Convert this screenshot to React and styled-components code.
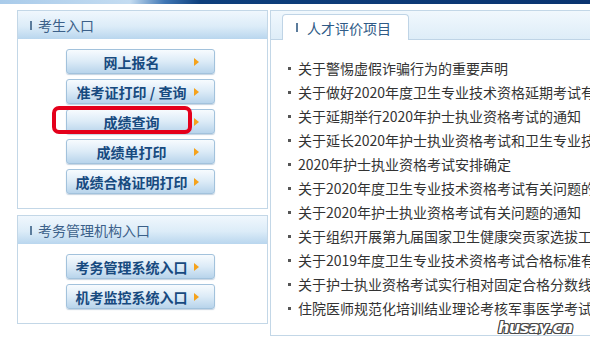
import React from "react";
import styled, { createGlobalStyle } from "styled-components";

const GlobalStyle = createGlobalStyle`
  html, body {
    margin: 0;
    padding: 0;
    background: #fff;
    overflow: hidden;
  }
  body {
    font-family: "Noto Sans CJK SC", "Noto Sans", sans-serif;
  }
`;

const examineeLinks = [
  "网上报名",
  "准考证打印 / 查询",
  "成绩查询",
  "成绩单打印",
  "成绩合格证明打印",
];

const agencyLinks = ["考务管理系统入口", "机考监控系统入口"];

// only the part that fits the panel is shown in the page
const news = [
  "关于警惕虚假诈骗行为的重要声明",
  "关于做好2020年度卫生专业技术资格延期考试有",
  "关于延期举行2020年护士执业资格考试的通知",
  "关于延长2020年护士执业资格考试和卫生专业技",
  "2020年护士执业资格考试安排确定",
  "关于2020年度卫生专业技术资格考试有关问题的",
  "关于2020年护士执业资格考试有关问题的通知",
  "关于组织开展第九届国家卫生健康突贡家选拔工",
  "关于2019年度卫生专业技术资格考试合格标准有",
  "关于护士执业资格考试实行相对固定合格分数线",
  "住院医师规范化培训结业理论考核军事医学考试",
];

export default function App() {
  return (
    <Page>
      <GlobalStyle />
      <TopBar />
      <Main>
        <LeftColumn>
          <Panel>
            <PanelHeader>
              <Marker />
              考生入口
            </PanelHeader>
            <ButtonList>
              {examineeLinks.map((label) => (
                <EntryButton key={label}>
                  <ButtonText>{label}</ButtonText>
                  <Arrow />
                  {label === "成绩查询" && <Highlight />}
                </EntryButton>
              ))}
            </ButtonList>
          </Panel>
          <Panel>
            <PanelHeader>
              <Marker />
              考务管理机构入口
            </PanelHeader>
            <ButtonList>
              {agencyLinks.map((label) => (
                <EntryButton key={label}>
                  <ButtonText>{label}</ButtonText>
                  <Arrow />
                </EntryButton>
              ))}
            </ButtonList>
          </Panel>
        </LeftColumn>
        <NewsPanel>
          <TabBar>
            <Tab>
              <Marker />
              人才评价项目
            </Tab>
          </TabBar>
          <NewsList>
            {news.map((item) => (
              <NewsItem key={item}>{item}</NewsItem>
            ))}
          </NewsList>
          <Watermark>husay.cn</Watermark>
        </NewsPanel>
      </Main>
    </Page>
  );
}

const Page = styled.div`
  width: 590px;
  height: 340px;
  overflow: hidden;
`;

const TopBar = styled.div`
  height: 4px;
  background: linear-gradient(
    90deg,
    #a9cbea 0,
    #c4dcf1 130px,
    #3f76b4 165px,
    #0e3f7c 200px,
    #0a3470 100%
  );
`;

const Main = styled.div`
  display: flex;
  gap: 2px;
  padding: 6px 0 0 17px;
`;

const LeftColumn = styled.div`
  display: flex;
  flex-direction: column;
  gap: 6px;
  width: 251px;
  flex: none;
`;

const Panel = styled.div`
  border: 1px solid #c3d7e7;
  background: #fff;
`;

const PanelHeader = styled.div`
  display: flex;
  align-items: center;
  height: 28px;
  padding-left: 12px;
  gap: 6px;
  font-size: 14px;
  color: #3b6089;
  background: linear-gradient(180deg, #f0f7fd 0%, #dcecf8 55%, #b9d6ee 100%);
`;

const Marker = styled.span`
  display: inline-block;
  width: 2px;
  height: 9px;
  background: #5b7c9c;
`;

const ButtonList = styled.div`
  display: flex;
  flex-direction: column;
  align-items: center;
  gap: 5px;
  padding: 10px 4px 14px 0;
`;

const EntryButton = styled.div`
  position: relative;
  display: flex;
  align-items: center;
  box-sizing: border-box;
  width: 149px;
  height: 25px;
  border: 1px solid #a2c2dc;
  border-radius: 3px;
  background: linear-gradient(180deg, #f7fbfe 0%, #dcebf7 50%, #b8d4eb 100%);
  box-shadow: 0 1px 1px rgba(90, 130, 170, 0.35);
`;

const ButtonText = styled.span`
  flex: 1;
  text-align: center;
  padding-left: 4px;
  font-size: 14px;
  font-weight: bold;
  color: #174a7f;
  white-space: nowrap;
`;

const Arrow = styled.span`
  width: 0;
  height: 0;
  margin: 0 15px 0 2px;
  border-top: 4px solid transparent;
  border-bottom: 4px solid transparent;
  border-left: 5px solid #f5a21b;
`;

const Highlight = styled.span`
  position: absolute;
  left: -15px;
  top: -4px;
  width: 140px;
  height: 28px;
  box-sizing: border-box;
  border: 4px solid #e4001b;
  border-radius: 7px;
`;

const NewsPanel = styled.div`
  position: relative;
  width: 340px;
  height: 326px;
  flex: none;
  box-sizing: border-box;
  overflow: hidden;
  border: 1px solid #c3d7e7;
  border-right: none;
`;

const TabBar = styled.div`
  display: flex;
  align-items: flex-end;
  height: 28px;
  padding-left: 11px;
  background: linear-gradient(180deg, #f1f8fd 0%, #deedf8 100%);
  border-bottom: 1px solid #bfd4e6;
`;

const Tab = styled.div`
  display: flex;
  align-items: center;
  gap: 9px;
  box-sizing: border-box;
  width: 127px;
  height: 26px;
  margin-bottom: -1px;
  padding-left: 13px;
  font-size: 14px;
  color: #2f5a86;
  background: #fff;
  border: 1px solid #bfd4e6;
  border-bottom: none;
  border-radius: 4px 4px 0 0;
`;

const NewsList = styled.ul`
  list-style: none;
  margin: 0;
  padding: 16px 0 0 17px;
`;

const NewsItem = styled.li`
  display: flex;
  align-items: center;
  height: 24px;
  font-size: 14px;
  color: #333;
  white-space: nowrap;

  &::before {
    content: "";
    flex: none;
    width: 3px;
    height: 3px;
    margin-right: 7px;
    background: #555;
  }
`;

const Watermark = styled.span`
  position: absolute;
  left: 227px;
  top: 309px;
  font-family: "DejaVu Sans", sans-serif;
  font-size: 16px;
  font-weight: bold;
  font-style: italic;
  letter-spacing: -0.5px;
  line-height: 1;
  color: #fff;
  text-shadow: 1px 0 0 #4a4a4a, -1px 0 0 #4a4a4a, 0 1px 0 #4a4a4a,
    0 -1px 0 #4a4a4a, 1px 1px 0 #4a4a4a, -1px -1px 0 #4a4a4a,
    1px -1px 0 #4a4a4a, -1px 1px 0 #4a4a4a;
`;
